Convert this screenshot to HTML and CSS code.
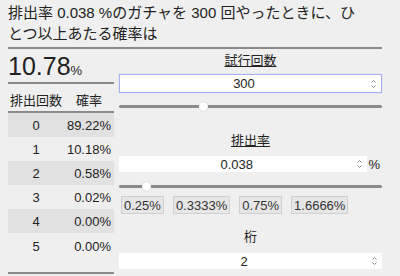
FILE: index.html
```html
<!DOCTYPE html>
<html lang="ja">
<head>
    <meta charset="UTF-8">
    <meta name="viewport" content="width=device-width, initial-scale=1.0">
    <title>ガチャ確率計算</title>
    <link rel="stylesheet" href="styles.css">
</head>
<body>
    <div class="page">
        <h1 class="title">排出率 0.038 %のガチャを 300 回やったときに、ひとつ以上あたる確率は</h1>

        <div class="main">
            <div class="left">
                <div class="answer">10.78<span class="unit">%</span></div>
                <table class="dist">
                    <thead>
                        <tr><th class="col-count">排出回数</th><th class="col-rate">確率</th></tr>
                    </thead>
                    <tbody>
                        <tr><td class="col-count">0</td><td class="col-rate">89.22%</td></tr>
                        <tr><td class="col-count">1</td><td class="col-rate">10.18%</td></tr>
                        <tr><td class="col-count">2</td><td class="col-rate">0.58%</td></tr>
                        <tr><td class="col-count">3</td><td class="col-rate">0.02%</td></tr>
                        <tr><td class="col-count">4</td><td class="col-rate">0.00%</td></tr>
                        <tr><td class="col-count">5</td><td class="col-rate">0.00%</td></tr>
                    </tbody>
                </table>
            </div>

            <div class="controls">
                <div class="label label-trials"><u>試行回数</u></div>
                <div class="field field-trials focused">
                    <input type="text" value="300">
                    <svg class="spin" width="7" height="10" viewBox="0 0 7 10"><path d="M1.5 3.5 L3.5 1.5 L5.5 3.5 M1.5 6.5 L3.5 8.5 L5.5 6.5" fill="none" stroke="#8c8c8c" stroke-width="1"/></svg>
                </div>
                <input type="range" class="slider slider-trials" min="0" max="1000" value="315">

                <div class="label label-rate"><u>排出率</u></div>
                <div class="rate-row">
                    <div class="field field-rate">
                        <input type="text" value="0.038">
                        <svg class="spin" width="7" height="10" viewBox="0 0 7 10"><path d="M1.5 3.5 L3.5 1.5 L5.5 3.5 M1.5 6.5 L3.5 8.5 L5.5 6.5" fill="none" stroke="#8c8c8c" stroke-width="1"/></svg>
                    </div>
                    <span class="pct">%</span>
                </div>
                <input type="range" class="slider slider-rate" min="0" max="1000" value="90">

                <div class="presets">
                    <button>0.25%</button>
                    <button>0.3333%</button>
                    <button>0.75%</button>
                    <button>1.6666%</button>
                </div>

                <div class="label label-digits">桁</div>
                <div class="field field-digits">
                    <input type="text" value="2">
                    <svg class="spin" width="7" height="10" viewBox="0 0 7 10"><path d="M1.5 3.5 L3.5 1.5 L5.5 3.5 M1.5 6.5 L3.5 8.5 L5.5 6.5" fill="none" stroke="#8c8c8c" stroke-width="1"/></svg>
                </div>
            </div>
        </div>
    </div>
</body>
</html>
```

FILE: styles.css
```css
body {
    margin: 0;
    padding: 0 8px;
    background: #efefef;
    color: #222;
    font-family: "Liberation Sans", "Noto Sans CJK JP", sans-serif;
}
.page {
    width: 374px;
}
.title {
    margin: 0;
    padding: 2px 16px 3px 0;
    font-size: 15px;
    font-weight: normal;
    line-height: 21px;
    border-bottom: 2px solid #8a8a8a;
}
.main {
    display: flex;
}
.left {
    width: 106px;
}
.answer {
    height: 31px;
    padding-top: 2px;
    font-size: 25px;
    line-height: 30px;
    border-bottom: 2px solid #8a8a8a;
}
.unit {
    font-size: 13px;
}
.dist {
    width: 100%;
    border-collapse: collapse;
    font-size: 13px;
    border-bottom: 2px solid #8a8a8a;
}
.dist th {
    font-weight: normal;
    padding: 8px 0 2px;
    line-height: 17px;
    border-bottom: 2px solid #8a8a8a;
}
.dist td {
    height: 24px;
    padding: 0;
    line-height: 17px;
}
.dist tbody tr:nth-child(odd) td {
    background: #e1e1e1;
}
.dist tbody tr:first-child td {
    border-top: 2px solid #efefef;
}
.dist tbody tr:last-child td {
    height: 34px;
    vertical-align: top;
    padding-top: 5px;
}
.col-count {
    width: 56px;
    text-align: center;
}
.dist td.col-rate {
    text-align: right;
    padding-right: 3px;
}
.dist th.col-rate {
    text-align: center;
}
.controls {
    flex: 1;
    margin-left: 5px;
    padding-top: 3px;
}
.label {
    height: 18px;
    line-height: 18px;
    font-size: 13px;
    text-align: center;
}
.field {
    display: flex;
    align-items: center;
    background: #fff;
    box-sizing: border-box;
    height: 16px;
}
.field input {
    flex: 1;
    min-width: 0;
    border: none;
    outline: none;
    background: transparent;
    padding: 0;
    font-family: inherit;
    font-size: 13px;
    color: #222;
    text-align: center;
}
.spin {
    margin: 0 4px 0 2px;
}
.field-trials {
    margin-top: 4px;
    height: 19px;
}
.focused {
    border: 1px solid #a3b2ee;
    box-shadow: 0 0 1px #c6d0f7;
}
.slider {
    -webkit-appearance: none;
    appearance: none;
    display: block;
    width: 100%;
    height: 10px;
    margin: 0;
    background: transparent;
}
.slider::-webkit-slider-runnable-track {
    height: 3px;
    background: #8a8a8a;
    border-radius: 2px;
}
.slider::-webkit-slider-thumb {
    -webkit-appearance: none;
    width: 9px;
    height: 9px;
    margin-top: -3px;
    border-radius: 50%;
    background: #fff;
    box-shadow: 0 0 1px #999;
}
.slider-trials {
    margin-top: 8px;
}
.label-rate {
    margin-top: 21px;
}
.rate-row {
    display: flex;
    align-items: center;
    margin-top: 6px;
}
.field-rate {
    flex: 1;
}
.pct {
    font-size: 13px;
    margin-left: 1px;
    margin-right: 2px;
}
.slider-rate {
    margin-top: 9px;
}
.presets {
    display: flex;
    gap: 9px;
    margin-top: 5px;
    padding-left: 2px;
}
.presets button {
    height: 18px;
    padding: 0 2px;
    font-family: inherit;
    font-size: 13px;
    color: #333;
    background: #e6e6e6;
    border: 1px solid #d0d0d0;
    border-radius: 0;
}
.label-digits {
    margin-top: 14px;
}
.field-digits {
    margin-top: 7px;
}
```
